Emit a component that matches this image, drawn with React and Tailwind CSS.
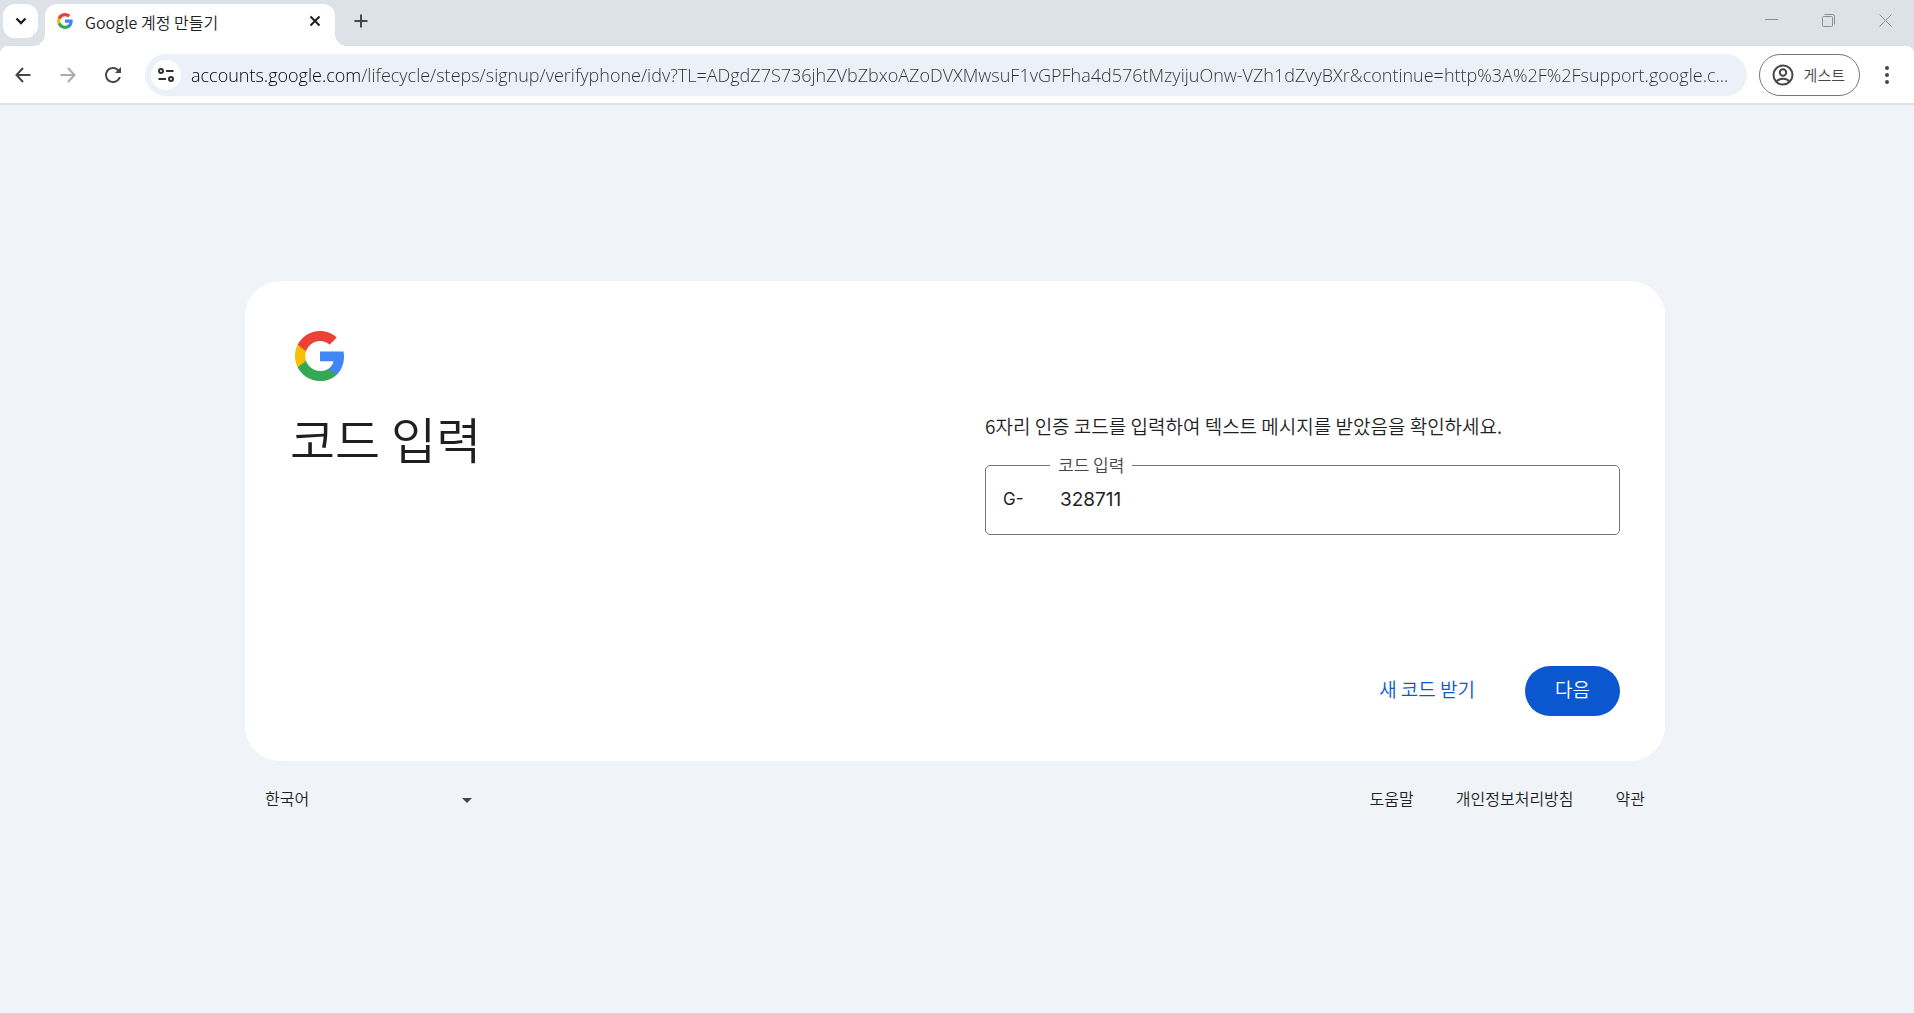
function GoogleLogo({ className }) {
  return (
    <svg viewBox="1 1 22 22" className={className} aria-hidden="true">
      <path
        fill="#4285F4"
        d="M22.56 12.25c0-.78-.07-1.53-.2-2.25H12v4.26h5.92c-.26 1.37-1.04 2.53-2.21 3.31v2.77h3.57c2.08-1.92 3.28-4.74 3.28-8.09z"
      />
      <path
        fill="#34A853"
        d="M12 23c2.97 0 5.46-.98 7.28-2.66l-3.57-2.77c-.98.66-2.23 1.06-3.71 1.06-2.86 0-5.29-1.93-6.16-4.53H2.18v2.84C3.99 20.53 7.7 23 12 23z"
      />
      <path
        fill="#FBBC05"
        d="M5.84 14.09c-.22-.66-.35-1.36-.35-2.09s.13-1.43.35-2.09V7.07H2.18C1.43 8.55 1 10.22 1 12s.43 3.45 1.18 4.93l3.66-2.84z"
      />
      <path
        fill="#EA4335"
        d="M12 5.38c1.62 0 3.06.56 4.21 1.64l3.15-3.15C17.45 2.09 14.97 1 12 1 7.7 1 3.99 3.47 2.18 7.07l3.66 2.84c.87-2.6 3.3-4.53 6.16-4.53z"
      />
    </svg>
  );
}

function TabStrip() {
  return (
    <div className="flex h-[46px] items-start bg-[#dde1e8]">
      <button
        type="button"
        aria-label="탭 검색"
        className="mt-1 ml-[3px] flex h-[34px] w-[35px] items-center justify-center rounded-xl bg-white"
      >
        <svg viewBox="0 0 12 8" className="h-2 w-3" fill="none" stroke="#1f1f1f" strokeWidth="2.4">
          <path d="M1.5 1.5 6 6l4.500-4.500" />
        </svg>
      </button>

      <div className="relative mt-1 ml-[7px] flex h-[42px] w-[290px] items-start rounded-t-xl bg-white pt-1 pr-[10px] pl-3">
        <span className="absolute bottom-0 -left-3 h-3 w-3 bg-[radial-gradient(circle_at_0_0,#dde1e8_12px,#fff_12px)]" />
        <span className="absolute -right-3 bottom-0 h-3 w-3 bg-[radial-gradient(circle_at_100%_0,#dde1e8_12px,#fff_12px)]" />
        <GoogleLogo className="mt-[5px] h-4 w-4" />
        <span className="ml-3 flex-1 truncate text-base leading-7 text-[#1f1f1f]">Google 계정 만들기</span>
        <button type="button" aria-label="탭 닫기" className="flex h-[26px] w-5 items-center justify-center">
          <svg viewBox="0 0 12 12" className="h-3 w-3" stroke="#1f1f1f" strokeWidth="2">
            <path d="M1.500 1.500l9 9M10.500 1.500l-9 9" />
          </svg>
        </button>
      </div>

      <button type="button" aria-label="새 탭" className="mt-1 ml-3 flex h-[34px] w-7 items-center justify-center">
        <svg viewBox="0 0 14 14" className="h-[14px] w-[14px]" stroke="#474747" strokeWidth="2">
          <path d="M7 .5v13M.5 7h13" />
        </svg>
      </button>

      <div className="ml-auto flex h-10 items-center">
        <button type="button" aria-label="최소화" className="flex h-10 w-[57px] items-center justify-center">
          <svg viewBox="0 0 13 13" className="h-[13px] w-[13px]" stroke="#8b8e93" strokeWidth="1">
            <path d="M0 5.500h13" />
          </svg>
        </button>
        <button type="button" aria-label="창 복원" className="flex h-10 w-[57px] items-center justify-center">
          <svg viewBox="0 0 13 13" className="h-[13px] w-[13px]" fill="none" stroke="#8b8e93">
            <rect x=".5" y="2.500" width="10" height="10" rx="1" />
            <path d="M2.500.5h8a2 2 0 0 1 2 2v8" />
          </svg>
        </button>
        <button type="button" aria-label="닫기" className="flex h-10 w-[57px] items-center justify-center">
          <svg viewBox="0 0 13 13" className="h-[13px] w-[13px]" stroke="#8b8e93">
            <path d="M.5.5l12 12M12.500.5l-12 12" />
          </svg>
        </button>
      </div>
    </div>
  );
}

function Toolbar() {
  return (
    <div className="bg-[#dde1e8]">
      <div className="flex items-center rounded-t-lg border-b-2 border-[#dfe2df] bg-white pt-2 pr-[5px] pb-[7px]">
        <button type="button" aria-label="뒤로" className="flex h-[42px] w-[45px] items-center justify-center">
          <svg viewBox="0 0 16 16" className="h-4 w-4" fill="none" stroke="#474747" strokeWidth="2">
            <path d="M15.500 8H1.500M8 1 1.500 8 8 15" />
          </svg>
        </button>
        <button type="button" aria-label="앞으로" className="flex h-[42px] w-[45px] items-center justify-center">
          <svg viewBox="0 0 16 16" className="h-4 w-4" fill="none" stroke="#ababab" strokeWidth="2">
            <path d="M.5 8h14M8 1l6.500 7L8 15" />
          </svg>
        </button>
        <button type="button" aria-label="새로고침" className="flex h-[42px] w-[45px] items-center justify-center">
          <svg viewBox="4 4 16 16" className="h-4 w-4" fill="#474747">
            <path d="M17.650 6.350A7.958 7.958 0 0 0 12 4c-4.420 0-7.990 3.580-7.990 8s3.570 8 7.990 8c3.730 0 6.840-2.550 7.730-6h-2.080A5.990 5.990 0 0 1 12 18c-3.310 0-6-2.690-6-6s2.690-6 6-6c1.660 0 3.140.69 4.220 1.780L14 10h6V4z" />
          </svg>
        </button>

        <div className="ml-[10px] flex h-[42px] min-w-0 flex-1 items-center rounded-full bg-[#ecf0f9] pr-2 pl-[6px]">
          <button
            type="button"
            aria-label="사이트 정보 보기"
            className="flex h-[30px] w-[30px] shrink-0 items-center justify-center rounded-full bg-white"
          >
            <svg viewBox="0 0 16 14" className="h-[14px] w-4" fill="none" stroke="#303030" strokeWidth="2">
              <circle cx="3" cy="3" r="2" />
              <path d="M8 3h7.500M.5 11H8" />
              <circle cx="13" cy="11" r="2" />
            </svg>
          </button>
          <input
            type="text"
            aria-label="주소창"
            readOnly
            value="accounts.google.com/lifecycle/steps/signup/verifyphone/idv?TL=ADgdZ7S736jhZVbZbxoAZoDVXMwsuF1vGPFha4d576tMzyijuOnw-VZh1dZvyBXr&continue=http%3A%2F%2Fsupport.google.c..."
            className="ml-[10px] h-8 min-w-0 flex-1 bg-[linear-gradient(90deg,#000_169px,#303030_169px)] bg-clip-text font-['Open_Sans',sans-serif] text-lg font-light text-transparent outline-none"
          />
        </div>

        <button
          type="button"
          className="ml-3 flex h-[42px] items-center rounded-full border border-[#747775] pr-[14px] pl-3 text-[15px] text-[#474747]"
        >
          <svg viewBox="0 0 22 22" className="mr-[10px] h-[22px] w-[22px]" fill="none" stroke="#474747" strokeWidth="2">
            <circle cx="11" cy="11" r="9.500" />
            <circle cx="11" cy="8.500" r="3.200" />
            <path d="M4.500 17.500c1.700-1.900 4-2.800 6.500-2.800s4.800.9 6.500 2.800" />
          </svg>
          게스트
        </button>
        <button type="button" aria-label="Chrome 맞춤설정" className="ml-1 flex h-[42px] w-[45px] items-center justify-center">
          <svg viewBox="0 0 4 18" className="h-[18px] w-1" fill="#474747">
            <circle cx="2" cy="2" r="2" />
            <circle cx="2" cy="9" r="2" />
            <circle cx="2" cy="16" r="2" />
          </svg>
        </button>
      </div>
    </div>
  );
}

function CodeField() {
  return (
    <fieldset className="flex h-20 rounded-[5px] border border-[#747775]">
      <legend className="ml-16 px-2 text-[17px] leading-5 text-[#444746]">
        <label htmlFor="code">코드 입력</label>
      </legend>
      <div className="flex h-[50px] w-full items-center font-['Inter','Noto_Sans_CJK_KR',sans-serif] font-normal text-[#1f1f1f]">
        <span className="w-[74px] pl-[17px] text-[17px]">G-</span>
        <input id="code" type="tel" defaultValue="328711" className="min-w-0 flex-1 text-[19px] outline-none" />
      </div>
    </fieldset>
  );
}

function VerifyCard() {
  return (
    <main className="flex min-h-[480px] flex-col rounded-[35px] bg-white p-[45px]">
      <GoogleLogo className="m-[5px] h-[50px] w-[50px]" />
      <div className="grid grid-cols-2 gap-[60px]">
        <h1 className="pt-5 text-[49px] leading-[64px] font-[350] text-[#1f1f1f]">코드 입력</h1>
        <div className="pt-[26px]">
          <p className="mb-[15px] text-[19px] leading-7 text-[#1f1f1f]">
            6자리 인증 코드를 입력하여 텍스트 메시지를 받았음을 확인하세요.
          </p>
          <CodeField />
        </div>
      </div>
      <div className="mt-auto flex justify-end gap-5 text-[19px]">
        <button type="button" className="h-[50px] rounded-full px-[30px] pb-1 text-[#0b57d0]">
          새 코드 받기
        </button>
        <button type="button" className="h-[50px] rounded-full bg-[#0b57d0] px-[30px] pb-1 text-white">
          다음
        </button>
      </div>
    </main>
  );
}

function Footer() {
  return (
    <footer className="flex h-[76px] items-center justify-between px-5 pb-0.5 text-base text-[#1f1f1f]">
      <div className="grid w-[207px] items-center">
        <select aria-label="언어 변경" className="col-start-1 row-start-1 w-full appearance-none outline-none">
          <option>한국어</option>
        </select>
        <svg viewBox="0 0 10 9" className="pointer-events-none col-start-1 row-start-1 h-[9px] w-[10px] justify-self-end" fill="#444746">
          <path d="M0 4h10L5 9z" />
        </svg>
      </div>
      <nav className="flex gap-[42px]">
        <a href="#help">도움말</a>
        <a href="#privacy">개인정보처리방침</a>
        <a href="#terms">약관</a>
      </nav>
    </footer>
  );
}

export default function App() {
  return (
    <div className="flex min-h-screen flex-col bg-[#f0f4f9] font-['Noto_Sans_CJK_KR',sans-serif] font-[350]">
      <header>
        <TabStrip />
        <Toolbar />
      </header>
      <div className="flex flex-1 items-center justify-center pr-1">
        <div className="w-full max-w-[1420px]">
          <VerifyCard />
          <Footer />
        </div>
      </div>
    </div>
  );
}
